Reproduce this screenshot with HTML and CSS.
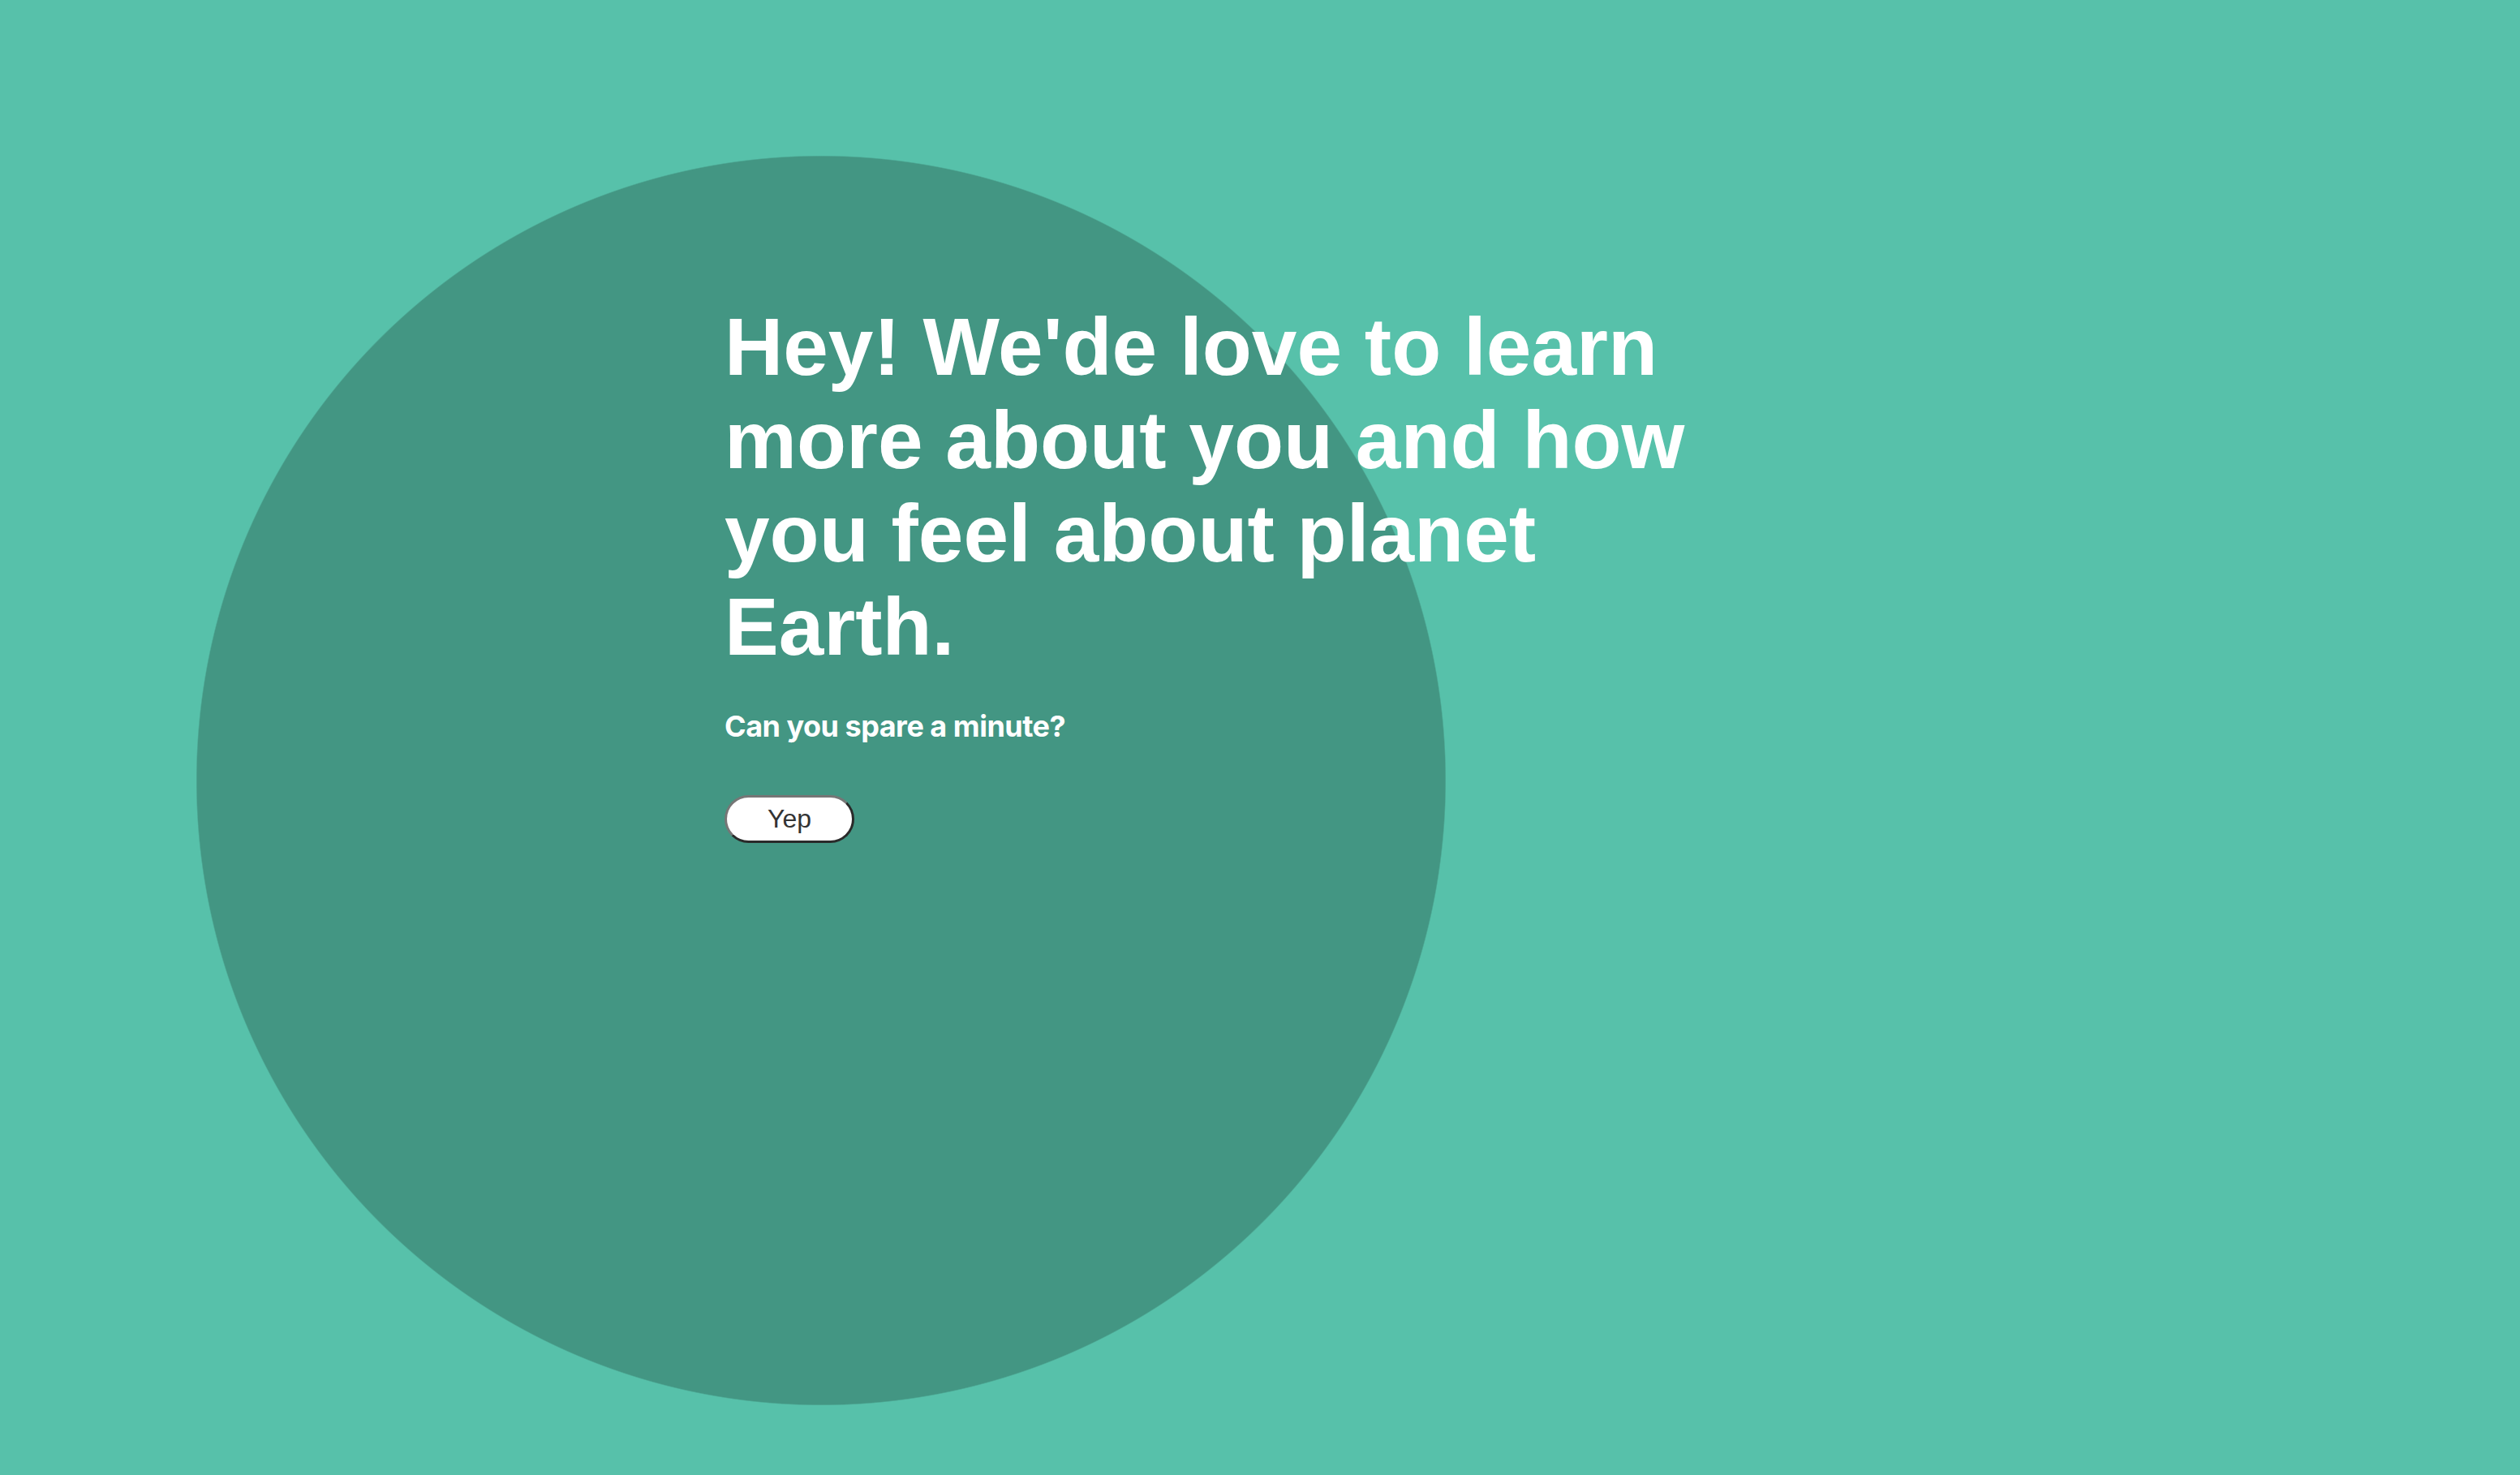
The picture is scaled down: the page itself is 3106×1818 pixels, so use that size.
FILE: index.html
```html
<!DOCTYPE html>
<html lang="en">
<head>
<meta charset="utf-8">
<title>Survey</title>
<link rel="stylesheet" href="styles.css">
</head>
<body>
<main class="page">
  <section class="intro">
    <h1 class="intro-title">Hey! We'de love to learn more about you and how you feel about planet Earth.</h1>
    <p class="intro-sub">Can you spare a minute?</p>
    <button class="intro-btn" type="button">Yep</button>
  </section>
</main>
</body>
</html>
```
FILE: styles.css
```css
html, body {
  margin: 0;
  padding: 0;
  height: 100%;
}
body {
  background-color: #57c1aa;
  background-image: radial-gradient(circle at 1012px 962px, #439683 769px, #57c1aa 770.5px);
  background-repeat: no-repeat;
  overflow: hidden;
}
.page {
  min-height: 100vh;
  box-sizing: border-box;
  padding: 370px 0 0 893px;
}
.intro {
  display: flex;
  flex-direction: column;
  align-items: flex-start;
  width: 1240px;
}
.intro-title {
  margin: 0;
  font-family: "Liberation Sans", Arial, sans-serif;
  font-weight: 700;
  font-size: 100px;
  line-height: 115px;
  color: #ffffff;
}
.intro-sub {
  margin: 43px 0 0 0;
  font-family: Inter, "Noto Sans", sans-serif;
  font-weight: 700;
  font-size: 36px;
  line-height: 44px;
  letter-spacing: -0.5px;
  color: #ffffff;
}
.intro-btn {
  margin-top: 63px;
  width: 160px;
  height: 59px;
  box-sizing: border-box;
  background: #ffffff;
  border-width: 3px;
  border-style: solid;
  border-color: #767676 #2a2a2a #2a2a2a #767676;
  border-radius: 30px;
  font-family: "Liberation Sans", Arial, sans-serif;
  font-size: 32px;
  color: #333333;
  padding: 0;
  cursor: pointer;
}
```
